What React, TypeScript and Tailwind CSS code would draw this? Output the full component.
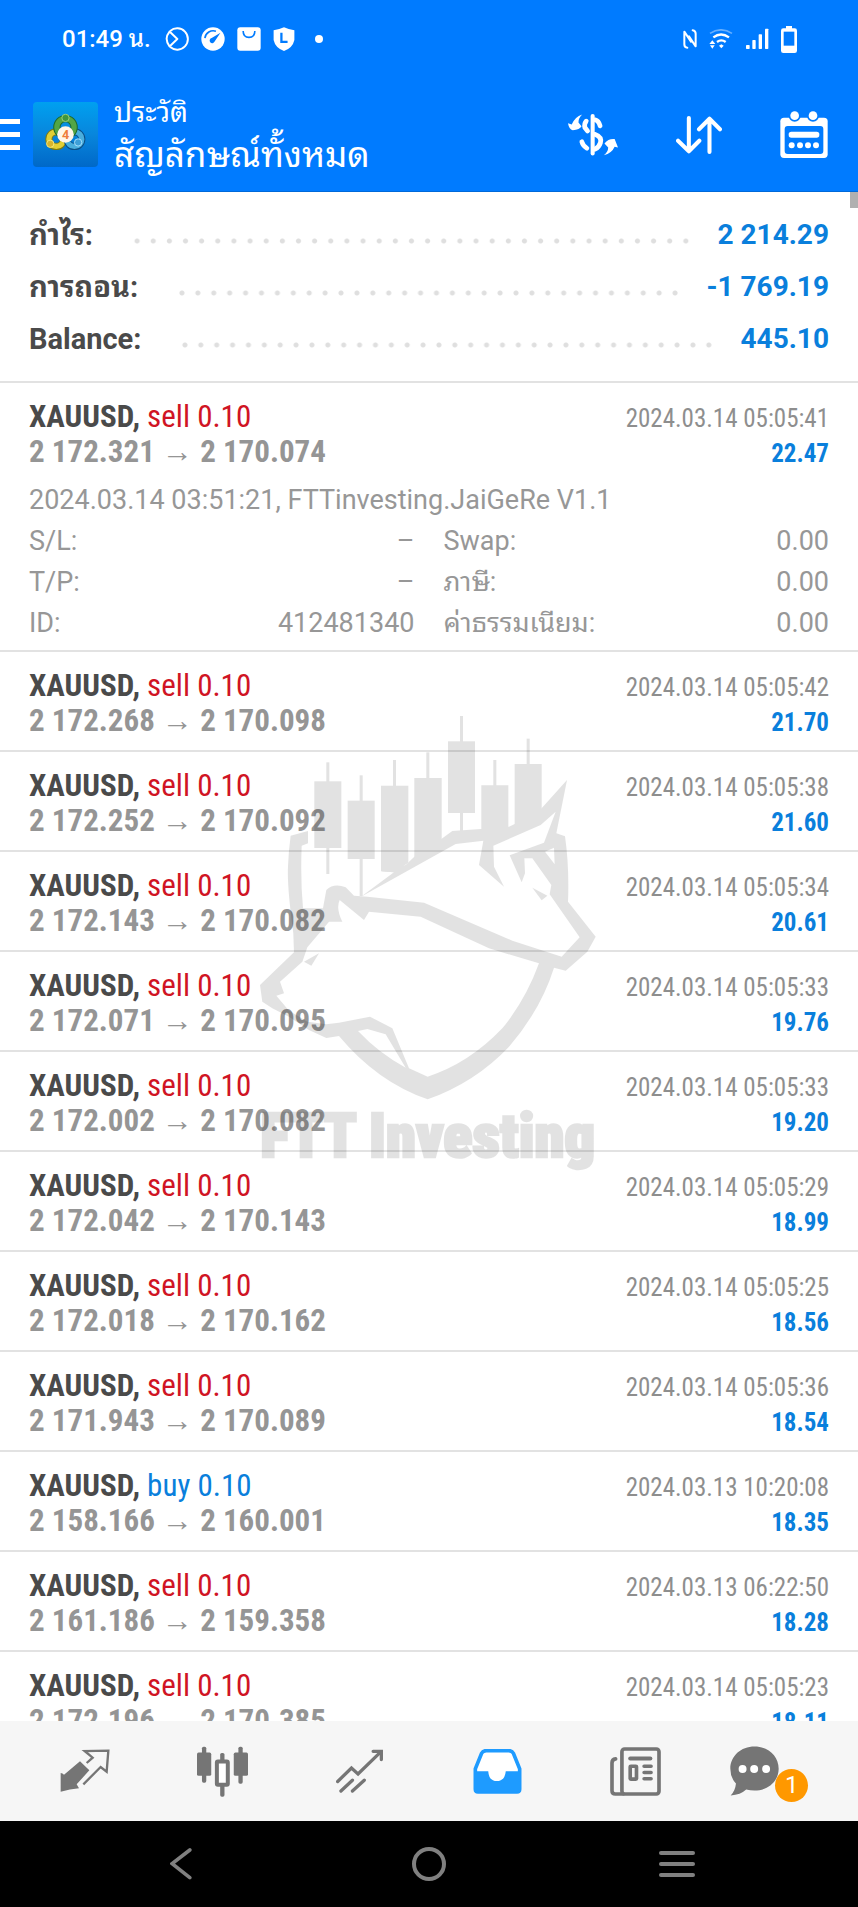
import React from 'react';

const deals = [
  { side: 'sell', open: '2 172.268', close: '2 170.098', time: '2024.03.14 05:05:42', profit: '21.70' },
  { side: 'sell', open: '2 172.252', close: '2 170.092', time: '2024.03.14 05:05:38', profit: '21.60' },
  { side: 'sell', open: '2 172.143', close: '2 170.082', time: '2024.03.14 05:05:34', profit: '20.61' },
  { side: 'sell', open: '2 172.071', close: '2 170.095', time: '2024.03.14 05:05:33', profit: '19.76' },
  { side: 'sell', open: '2 172.002', close: '2 170.082', time: '2024.03.14 05:05:33', profit: '19.20' },
  { side: 'sell', open: '2 172.042', close: '2 170.143', time: '2024.03.14 05:05:29', profit: '18.99' },
  { side: 'sell', open: '2 172.018', close: '2 170.162', time: '2024.03.14 05:05:25', profit: '18.56' },
  { side: 'sell', open: '2 171.943', close: '2 170.089', time: '2024.03.14 05:05:36', profit: '18.54' },
  { side: 'buy', open: '2 158.166', close: '2 160.001', time: '2024.03.13 10:20:08', profit: '18.35' },
  { side: 'sell', open: '2 161.186', close: '2 159.358', time: '2024.03.13 06:22:50', profit: '18.28' },
  { side: 'sell', open: '2 172.196', close: '2 170.385', time: '2024.03.14 05:05:23', profit: '18.11' },
];

const firstDeal = { side: 'sell', open: '2 172.321', close: '2 170.074', time: '2024.03.14 05:05:41', profit: '22.47' };

const summary = [
  { label: 'กำไร:', value: '2 214.29' },
  { label: 'การถอน:', value: '-1 769.19' },
  { label: 'Balance:', value: '445.10' },
];

const StatusBar = () => (
  <div className="flex items-center justify-between h-[78px] pl-[62px] pr-[61px] text-white">
    <div className="flex items-center">
      <span className="text-2xl leading-6 font-medium mr-[14px]">01:49 น.</span>
      <svg viewBox="0 0 74 74" className="w-6 h-6 mr-3" fill="none" stroke="white" strokeWidth="6">
        <path d="M16 12A33 33 0 1 1 16 62" />
        <path d="M14 14Q-4 36 14 60L38 37Z" strokeLinejoin="round" />
      </svg>
      <svg viewBox="0 0 74 74" className="w-6 h-6 mr-3">
        <circle cx="37" cy="37" r="36" fill="white" />
        <path d="M12 34A26 26 0 0 1 46 13" fill="none" stroke="#007bff" strokeWidth="5" />
        <path d="M60 18L42 45A8 8 0 1 1 33 34Z" fill="#007bff" />
      </svg>
      <svg viewBox="0 0 74 74" className="w-6 h-6 mr-3">
        <rect x="1" y="1" width="72" height="72" rx="9" fill="white" />
        <path d="M19 12Q19 32 37 32T55 12" fill="none" stroke="#007bff" strokeWidth="5" />
      </svg>
      <svg viewBox="0 0 66 74" className="w-[22px] h-6 mr-5">
        <path d="M1 10Q20 8 33 1Q46 8 65 10V40Q60 64 33 74Q6 64 1 40Z" fill="white" />
        <path d="M25 18V46H44" fill="none" stroke="#007bff" strokeWidth="7" />
      </svg>
      <span className="w-2 h-2 rounded-full bg-white" />
    </div>
    <div className="flex items-center">
      <svg viewBox="0 0 42 60" className="w-[14px] h-5 mr-3" fill="none" stroke="white" strokeWidth="6" strokeLinecap="round" strokeLinejoin="round">
        <path d="M13 56Q4 56 4 46V8L24 38M29 4Q38 6 38 14V52L18 22" />
      </svg>
      <svg viewBox="0 0 72 60" className="w-6 h-5 mr-3" fill="none" stroke="white" strokeWidth="7">
        <path d="M3 13Q36 -8 69 13" opacity="0.4" strokeWidth="5" />
        <path d="M13 25Q36 8 60 25" />
        <path d="M24 39Q37 29 50 39" />
        <path d="M30 50L37 46L44 50L37 58Z" fill="white" stroke="none" />
        <path d="M1 45L10 34L19 45ZM3 49H17L10 59Z" fill="white" stroke="none" />
      </svg>
      <svg viewBox="0 0 72 66" className="w-6 h-[22px] mr-3" fill="white">
        <rect x="3" y="51" width="11" height="12" rx="2" />
        <rect x="22" y="36" width="10" height="27" rx="2" />
        <rect x="41" y="19" width="10" height="44" rx="2" />
        <rect x="60" y="2" width="10" height="61" rx="2" />
      </svg>
      <svg viewBox="0 0 48 81" className="w-4 h-[27px]">
        <path d="M15 0H33V7H41Q48 7 48 14V74Q48 81 41 81H7Q0 81 0 74V14Q0 7 7 7H15Z" fill="white" />
        <rect x="8" y="17" width="32" height="42" fill="#007bff" />
      </svg>
    </div>
  </div>
);

const AppLogo = () => (
  <svg viewBox="0 0 196 196" className="w-[65px] h-[65px] shrink-0">
    <defs>
      <linearGradient id="tile" x1="0" y1="0" x2="0" y2="1">
        <stop offset="0" stopColor="#00a0f0" />
        <stop offset="0.5" stopColor="#0886dc" />
        <stop offset="1" stopColor="#0068c8" />
      </linearGradient>
    </defs>
    <rect width="196" height="196" rx="12" fill="url(#tile)" />
    <g fill="none" strokeLinecap="round">
      <circle cx="70" cy="112" r="22" stroke="#7a7a16" strokeWidth="22" />
      <circle cx="70" cy="112" r="22" stroke="#e2cf35" strokeWidth="16" />
      <circle cx="125" cy="112" r="22" stroke="#0b4f86" strokeWidth="22" />
      <circle cx="125" cy="112" r="22" stroke="#4aaedd" strokeWidth="16" />
      <circle cx="98" cy="76" r="26" stroke="#1d6a2c" strokeWidth="22" />
      <circle cx="98" cy="76" r="26" stroke="#53a545" strokeWidth="16" />
    </g>
    <circle cx="98" cy="48" r="11" fill="#3f963d" stroke="#9ad07c" strokeWidth="3" />
    <circle cx="52" cy="126" r="11" fill="#d8b52d" stroke="#f5e77f" strokeWidth="3" />
    <circle cx="136" cy="122" r="11" fill="#3d9fd8" stroke="#a5defa" strokeWidth="3" />
    <circle cx="98" cy="98" r="25" fill="#fff6ea" />
    <text x="98" y="112" textAnchor="middle" fontSize="38" fontWeight="700" fill="#ee7c3b">4</text>
  </svg>
);

const AppBar = () => (
  <div className="flex items-center h-[113px] pr-[30px] text-white">
    <button aria-label="Menu" className="flex flex-col gap-2 w-5 mr-[13px] shrink-0">
      <span className="h-[5px] w-full bg-white" />
      <span className="h-[5px] w-full bg-white" />
      <span className="h-[5px] w-full bg-white" />
    </button>
    <AppLogo />
    <div className="ml-4 flex-1">
      <p className="text-[28px] leading-[42px]">ประวัติ</p>
      <h1 className="text-[35px] leading-[44px]">สัญลักษณ์ทั้งหมด</h1>
    </div>
    <div className="flex items-center gap-[58px]">
      <button aria-label="Currency">
        <svg viewBox="0 0 148 124" className="w-[50px] h-[42px]" fill="white">
          <path d="M42 1Q30 12 31 25L40 36Q35 46 14 48Q3 45 0 27L11 31Q20 8 42 1Z" />
          <path d="M106 122Q119 111 119 99L108 87Q120 72 138 74L148 99L138 97Q130 116 106 122Z" />
          <rect x="67" y="0" width="12" height="123" rx="6" />
          <g fill="none" stroke="white" strokeWidth="14" strokeLinecap="round">
            <path d="M54 21Q47 29 50 40L58 50" />
            <path d="M80 17Q91 20 95 35" />
            <path d="M79 60Q101 68 96 85Q92 98 80 104" />
            <path d="M41 82Q44 94 56 101" />
          </g>
        </svg>
      </button>
      <button aria-label="Sort">
        <svg viewBox="0 0 136 112" className="w-[46px] h-[38px]" fill="none" stroke="white" strokeWidth="12" strokeLinecap="round" strokeLinejoin="round">
          <path d="M38 6V104M6 73L38 104L69 73" />
          <path d="M99 106V8M68 39L99 8L130 39" />
        </svg>
      </button>
      <button aria-label="Calendar">
        <svg viewBox="0 0 144 144" className="w-12 h-12">
          <path d="M12 20H132Q143 20 143 31V130Q143 141 132 141H12Q1 141 1 130V31Q1 20 12 20Z" fill="white" />
          <circle cx="44" cy="14" r="18" fill="#007bff" />
          <circle cx="99" cy="14" r="18" fill="#007bff" />
          <circle cx="44" cy="14" r="13" fill="white" />
          <circle cx="99" cy="14" r="13" fill="white" />
          <rect x="14" y="45" width="116" height="84" rx="9" fill="#007bff" />
          <rect x="26" y="62" width="92" height="18" rx="8" fill="white" />
          <circle cx="35" cy="103" r="9" fill="white" />
          <circle cx="60" cy="103" r="9" fill="white" />
          <circle cx="84" cy="103" r="9" fill="white" />
          <circle cx="108" cy="103" r="9" fill="white" />
        </svg>
      </button>
    </div>
  </div>
);

const Deal = ({ deal, children }) => (
  <li className="border-t-2 border-[#e2e2e2] px-[29px] pt-4 pb-3">
    <div className="font-['Roboto_Condensed','Liberation_Sans_Narrow',Roboto,sans-serif] text-[31px] leading-[35px]">
      <div className="flex items-baseline justify-between h-[35px]">
        <p>
          <span className="font-bold text-[#4a4a4a]">XAUUSD,</span>{' '}
          <span className={deal.side === 'buy' ? 'text-[#0a7fdc]' : 'text-[#d01424]'}>{deal.side} 0.10</span>
        </p>
        <p className="text-[25px] text-[#8e8e8e]">{deal.time}</p>
      </div>
      <div className="flex items-baseline justify-between h-[35px] font-bold">
        <p className="text-[#959595]">
          {deal.open} <span>→</span> {deal.close}
        </p>
        <p className="text-[25px] text-[#0a7fdc]">{deal.profit}</p>
      </div>
    </div>
    {children}
  </li>
);

const Detail = ({ label, value }) => (
  <div className="flex justify-between">
    <dt>{label}</dt>
    <dd>{value}</dd>
  </div>
);

const Watermark = () => (
  <svg viewBox="0 0 1140 1440" className="pointer-events-none absolute top-[508px] left-1/2 -translate-x-1/2 w-[380px] h-[480px]">
    <g opacity="0.11">
      <g>
        <rect x="262" y="187" width="9" height="335" />
        <rect x="226" y="244" width="81" height="200" />
        <rect x="362" y="226" width="9" height="362" />
        <rect x="326" y="302" width="81" height="175" />
        <rect x="462" y="180" width="9" height="90" />
        <path d="M426 257H508V488L465 517L426 514Z" />
        <rect x="562" y="157" width="9" height="90" />
        <path d="M526 234H608V420L526 475Z" />
        <rect x="663" y="48" width="9" height="345" />
        <rect x="627" y="124" width="81" height="215" />
        <rect x="763" y="180" width="9" height="90" />
        <path d="M727 256H808V395H727Z" />
        <rect x="863" y="116" width="9" height="90" />
        <path d="M827 192H908V350L880 380L827 392Z" />
      </g>
      <path
        fillRule="evenodd"
        d="M366 590L465 517L427 514L500 495L526 470L608 416L640 393L727 387L810 380L870 352L908 325L984 240L952 400L978 409Q991 500 987 605L1070 710L1045 755L980 812L945 803Q905 930 810 1040Q710 1146 566 1198Q415 1146 300 1008L262 1014L210 990L150 950L100 925L70 905L63 855L165 757L163 700Q144 560 147 500Q149 450 155 407L207 393V430L188 437Q184 540 192 625L252 625L262 570Q285 548 320 562L345 587L385 590L555 608L820 722L968 770L1022 712L932 583L937 555L880 475L856 475L858 520L848 547L812 466L915 428L950 335L905 375L763 437L765 500L795 560L720 495L733 422L650 432Z
        M390 635L545 650L750 745L900 790Q860 900 790 985Q690 1090 566 1130L510 1105L460 985L393 950L300 968L262 973L205 965L150 932L112 887L135 880L123 845L190 785L205 742L270 665L310 665Q290 625 302 600L375 660Z
        M357 993L385 987L440 1003L500 1103Q420 1060 357 993Z
        M918 455L945 443L947 493Z"
      />
      <path d="M880 563L925 587L908 601ZM195 785L240 760L217 797Z" />
      <text x="566" y="1371" textAnchor="middle" fontSize="181" fontWeight="900" stroke="black" strokeWidth="8" className="font-['Roboto_Condensed','Liberation_Sans_Narrow',Roboto,sans-serif]">
        FTT Investing
      </text>
    </g>
  </svg>
);

const BottomNav = () => (
  <nav className="grid grid-cols-6 h-[100px] shrink-0 px-4 bg-[#f6f6f6] text-[#757575]">
    <button aria-label="Quotes" className="flex items-center justify-center">
      <svg viewBox="0 0 150 132" className="w-[50px] h-11">
        <path d="M2 72Q8 72 12 77L60 37L88 64L50 106L57 118Q30 120 2 128Z" fill="currentColor" />
        <path d="M80 42L98 26L74 6L145 5L140 68L122 54L70 106" fill="none" stroke="currentColor" strokeWidth="7" />
      </svg>
    </button>
    <button aria-label="Chart" className="flex items-center justify-center">
      <svg viewBox="0 0 154 152" className="w-[51px] h-[51px]" fill="currentColor">
        <rect x="15" y="1" width="13" height="109" rx="5" />
        <rect x="0" y="19" width="43" height="70" rx="5" />
        <rect x="70" y="20" width="13" height="30" rx="5" />
        <rect x="70" y="116" width="13" height="36" rx="5" />
        <rect x="60" y="46" width="33" height="70" rx="3" fill="white" stroke="currentColor" strokeWidth="12" />
        <rect x="125" y="1" width="13" height="112" rx="5" />
        <rect x="111" y="19" width="43" height="70" rx="5" />
      </svg>
    </button>
    <button aria-label="Trade" className="flex items-center justify-center">
      <svg viewBox="0 0 146 134" className="w-12 h-11" fill="none" stroke="currentColor" strokeWidth="10" strokeLinecap="round">
        <path d="M5 99L47 58L67 76L137 8" />
        <path d="M113 7H138V32" />
        <path d="M15 128L50 95M50 128L86 95" />
      </svg>
    </button>
    <button aria-label="History" className="flex items-center justify-center">
      <svg viewBox="0 0 148 136" className="w-[49px] h-[45px]">
        <path d="M40 5H108Q118 5 122 13L141 60V122Q141 130 133 130H15Q7 130 7 122V60L26 13Q30 5 40 5Z" fill="white" stroke="#1e9bff" strokeWidth="11" />
        <path d="M4 67H46Q48 97 72 97T99 67H144V123Q144 132 135 132H13Q4 132 4 123Z" fill="#1e9bff" />
      </svg>
    </button>
    <button aria-label="News" className="flex items-center justify-center">
      <svg viewBox="0 0 154 148" className="w-[51px] h-[49px]" fill="none" stroke="currentColor" strokeWidth="11" strokeLinecap="round">
        <rect x="36" y="6" width="112" height="136" rx="8" />
        <path d="M17 36Q6 37 6 48V132Q6 142 16 142H40" />
        <path d="M61 35H122" strokeWidth="12" />
        <rect x="61" y="58" width="19" height="39" rx="2" />
        <path d="M103 58H124M103 77H124M103 96H124" />
      </svg>
    </button>
    <button aria-label="Messages" className="flex items-center justify-center pr-2">
      <svg viewBox="0 0 148 150" className="w-[49px] h-[50px]">
        <path d="M74 1C115 1 147 30 147 68S115 134 74 134Q61 134 49 131Q32 147 2 149Q16 135 18 113Q1 95 1 68C1 30 33 1 74 1Z" fill="currentColor" />
        <circle cx="38" cy="69" r="12" fill="white" />
        <circle cx="73" cy="69" r="12" fill="white" />
        <circle cx="109" cy="69" r="12" fill="white" />
      </svg>
      <span className="flex items-center justify-center w-[33px] h-[33px] -ml-1 mt-7 rounded-full bg-[#ff9800] text-white text-2xl">1</span>
    </button>
  </nav>
);

const SystemNav = () => (
  <div className="grid grid-cols-3 h-[86px] shrink-0 px-[57px] bg-black text-[#808080]">
    <button aria-label="Back" className="flex items-center justify-center">
      <svg viewBox="0 0 66 98" className="w-[22px] h-8" fill="none" stroke="currentColor" strokeWidth="11" strokeLinecap="round">
        <path d="M60 6L6 48L60 91" />
      </svg>
    </button>
    <button aria-label="Home" className="flex items-center justify-center">
      <span className="w-[34px] h-[34px] rounded-full border-4 border-[#808080]" />
    </button>
    <button aria-label="Recent apps" className="flex flex-col items-center justify-center gap-[7px]">
      <span className="w-9 h-1 rounded-full bg-[#808080]" />
      <span className="w-9 h-1 rounded-full bg-[#808080]" />
      <span className="w-9 h-1 rounded-full bg-[#808080]" />
    </button>
  </div>
);

const App = () => {
  return (
    <div className="flex flex-col h-screen overflow-hidden bg-white font-[Roboto,'Noto_Sans_Thai_Looped',Loma,'Noto_Sans_Thai','Noto_Sans',sans-serif]">
      <header className="shrink-0 bg-[#007bff] border-b border-[#0069d9]">
        <StatusBar />
        <AppBar />
      </header>

      <main className="relative flex-1 min-h-0 overflow-hidden">
        {/* Account totals */}
        <dl className="px-[29px] pt-[17px] pb-4 text-[28px] leading-[52px] font-bold">
          {summary.map((item) => (
            <div key={item.label} className="flex items-center h-[52px]">
              <dt className="text-[29px] text-[#4a4a4a]">{item.label}</dt>
              <dd className="flex flex-1 items-center text-[#0a7fdc]">
                <span className="flex-1 h-[6px] mt-3 ml-9 mr-6 bg-[radial-gradient(circle,#dfdfdf_2px,transparent_3px)] bg-[length:16px_6px] bg-repeat-round" />
                {item.value}
              </dd>
            </div>
          ))}
        </dl>

        <ul>
          <Deal deal={firstDeal}>
            <div className="pt-[11px] -mb-[6px] text-[27px] leading-[41px] text-[#979797]">
              <p>2024.03.14 03:51:21, FTTinvesting.JaiGeRe V1.1</p>
              <dl className="grid grid-cols-2 gap-x-[29px]">
                <Detail label="S/L:" value="–" />
                <Detail label="Swap:" value="0.00" />
                <Detail label="T/P:" value="–" />
                <Detail label="ภาษี:" value="0.00" />
                <Detail label="ID:" value="412481340" />
                <Detail label="ค่าธรรมเนียม:" value="0.00" />
              </dl>
            </div>
          </Deal>
          {deals.map((deal) => (
            <Deal key={deal.open} deal={deal} />
          ))}
        </ul>

        <Watermark />
        <div className="absolute top-0 right-0 w-2 h-4 bg-[#b0b0b0]" />
      </main>

      <BottomNav />
      <SystemNav />
    </div>
  );
};

export default App;
